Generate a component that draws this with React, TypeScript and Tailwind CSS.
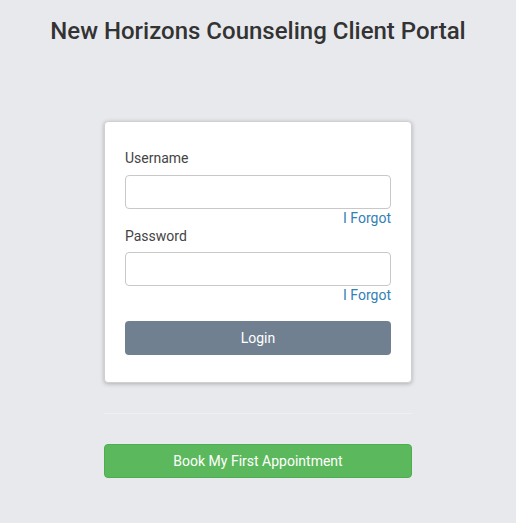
export default function App() {
  return (
    <div className="min-h-[523px] bg-[#e8e9ed] font-['Roboto',sans-serif] text-[#333]">
      <h1 className="pt-[17px] text-center text-[24px] leading-[28px] font-medium text-[#333]">
        New Horizons Counseling Client Portal
      </h1>
      <div className="mx-auto mt-[76px] w-[308px]">
        <div className="rounded-[4px] border border-[#d0d0d0] bg-white px-[20px] pt-[26px] pb-[27px] shadow-[0_1px_4px_rgba(0,0,0,0.25)]">
          <label className="block text-[14px] leading-[20px] text-[#444]">Username</label>
          <input
            type="text"
            className="mt-[7px] block h-[34px] w-full rounded-[4px] border border-[#c8c8c8] bg-white px-2 text-[14px] outline-none"
          />
          <div className="text-right text-[14px] leading-[18px] text-[#3380b5]">I Forgot</div>
          <label className="block text-[14px] leading-[18px] text-[#444]">Password</label>
          <input
            type="password"
            className="mt-[7px] block h-[34px] w-full rounded-[4px] border border-[#c8c8c8] bg-white px-2 text-[14px] outline-none"
          />
          <div className="text-right text-[14px] leading-[18px] text-[#3380b5]">I Forgot</div>
          <button className="mt-[17px] block h-[34px] w-full rounded-[4px] bg-[#708090] text-[14px] text-white">
            Login
          </button>
        </div>
        <div className="mt-[30px] h-px bg-[#eef0f2]" />
        <button className="mt-[30px] block h-[34px] w-full rounded-[4px] border border-[#4cae4c] bg-[#5cb85c] text-[14px] text-white">
          Book My First Appointment
        </button>
      </div>
    </div>
  );
}
